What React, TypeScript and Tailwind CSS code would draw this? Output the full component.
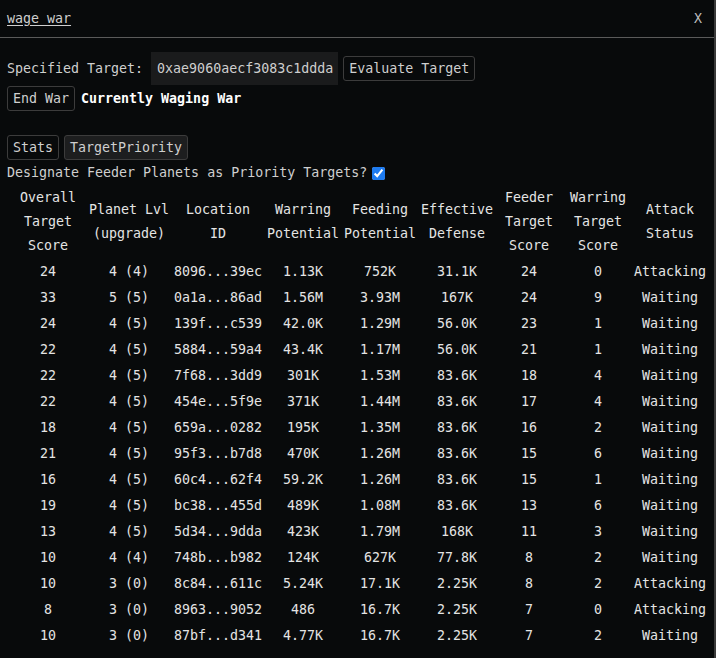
import React, { useState } from 'react';

type Row = [string, string, string, string, string, string, string, string, string];

const rows: Row[] = [
  ['24', '4 (4)', '8096...39ec', '1.13K', '752K', '31.1K', '24', '0', 'Attacking'],
  ['33', '5 (5)', '0a1a...86ad', '1.56M', '3.93M', '167K', '24', '9', 'Waiting'],
  ['24', '4 (5)', '139f...c539', '42.0K', '1.29M', '56.0K', '23', '1', 'Waiting'],
  ['22', '4 (5)', '5884...59a4', '43.4K', '1.17M', '56.0K', '21', '1', 'Waiting'],
  ['22', '4 (5)', '7f68...3dd9', '301K', '1.53M', '83.6K', '18', '4', 'Waiting'],
  ['22', '4 (5)', '454e...5f9e', '371K', '1.44M', '83.6K', '17', '4', 'Waiting'],
  ['18', '4 (5)', '659a...0282', '195K', '1.35M', '83.6K', '16', '2', 'Waiting'],
  ['21', '4 (5)', '95f3...b7d8', '470K', '1.26M', '83.6K', '15', '6', 'Waiting'],
  ['16', '4 (5)', '60c4...62f4', '59.2K', '1.26M', '83.6K', '15', '1', 'Waiting'],
  ['19', '4 (5)', 'bc38...455d', '489K', '1.08M', '83.6K', '13', '6', 'Waiting'],
  ['13', '4 (5)', '5d34...9dda', '423K', '1.79M', '168K', '11', '3', 'Waiting'],
  ['10', '4 (4)', '748b...b982', '124K', '627K', '77.8K', '8', '2', 'Waiting'],
  ['10', '3 (0)', '8c84...611c', '5.24K', '17.1K', '2.25K', '8', '2', 'Attacking'],
  ['8', '3 (0)', '8963...9052', '486', '16.7K', '2.25K', '7', '0', 'Attacking'],
  ['10', '3 (0)', '87bf...d341', '4.77K', '16.7K', '2.25K', '7', '2', 'Waiting'],
];

// header lines as they wrap in the panel
const headers: string[][] = [
  ['Overall', 'Target', 'Score'],
  ['Planet Lvl', '(upgrade)'],
  ['Location', 'ID'],
  ['Warring', 'Potential'],
  ['Feeding', 'Potential'],
  ['Effective', 'Defense'],
  ['Feeder', 'Target', 'Score'],
  ['Warring', 'Target', 'Score'],
  ['Attack', 'Status'],
];

const colWidths = ['w-[82px]', 'w-[80px]', 'w-[98px]', 'w-[72px]', 'w-[82px]', 'w-[72px]', 'w-[72px]', 'w-[66px]', 'w-[78px]'];

export default function App() {
  const [tab, setTab] = useState<'stats' | 'priority'>('priority');
  const [feeders, setFeeders] = useState(true);

  return (
    <div className="min-h-screen bg-[#080a0b] text-[#cfcfcf] font-['DejaVu_Sans_Mono',monospace] text-[13.3px] leading-6">
      <div className="border-r-2 border-[#3a3a3a] min-h-screen">
        {/* Title bar */}
        <div className="h-[38px] border-b border-[#5a5a5a] flex items-center justify-between pl-[7px] pr-[12px]">
          <span className="underline underline-offset-2">wage war</span>
          <button className="text-[#bdbdbd]">X</button>
        </div>

        <div className="px-[7px]">
          {/* Target */}
          <div className="flex items-center mt-[14px]">
            <span>Specified Target:</span>
            <span className="ml-[8px] bg-[#1a1b1c] h-[33px] flex items-center pl-[6px] pr-[5px]">
              0xae9060aecf3083c1ddda
            </span>
            <button className="ml-[5px] h-[25px] px-[5px] border border-[#3c3c3c] rounded-[3px] flex items-center">
              Evaluate Target
            </button>
          </div>

          <div className="flex items-center mt-px">
            <button className="h-[25px] px-[5px] border border-[#3c3c3c] rounded-[3px] flex items-center">
              End War
            </button>
            <span className="ml-[6px] text-white font-bold">Currently Waging War</span>
          </div>

          {/* Tabs */}
          <div className="flex items-center gap-[5px] mt-[24px]">
            <button
              onClick={() => setTab('stats')}
              className={
                'h-[25px] px-[5px] border border-[#3c3c3c] rounded-[3px] flex items-center ' +
                (tab === 'stats' ? 'bg-[#1d1e1f]' : 'bg-transparent')
              }
            >
              Stats
            </button>
            <button
              onClick={() => setTab('priority')}
              className={
                'h-[25px] px-[5px] border border-[#3c3c3c] rounded-[3px] flex items-center ' +
                (tab === 'priority' ? 'bg-[#1d1e1f]' : 'bg-transparent')
              }
            >
              TargetPriority
            </button>
          </div>

          <label className="flex items-center mt-px">
            <span>Designate Feeder Planets as Priority Targets?</span>
            <input
              type="checkbox"
              checked={feeders}
              onChange={(e) => setFeeders(e.target.checked)}
              className="ml-[5px] w-[13px] h-[13px] accent-[#1e7bf0]"
            />
          </label>

          <table className="w-[702px] table-fixed text-center text-[#e4e4e4] border-separate border-spacing-0">
            <colgroup>
              {colWidths.map((w, i) => (
                <col key={i} className={w} />
              ))}
            </colgroup>
            <thead>
              <tr>
                {headers.map((h, i) => (
                  <th key={i} className="font-normal p-0 py-px whitespace-nowrap align-middle">
                    {h.map((line, k) => (
                      <div key={k}>{line}</div>
                    ))}
                  </th>
                ))}
              </tr>
            </thead>
            <tbody>
              {rows.map((r, i) => (
                <tr key={i}>
                  {r.map((c, j) => (
                    <td key={j} className="p-0 py-px whitespace-nowrap">
                      {c}
                    </td>
                  ))}
                </tr>
              ))}
            </tbody>
          </table>
        </div>
      </div>
    </div>
  );
}
